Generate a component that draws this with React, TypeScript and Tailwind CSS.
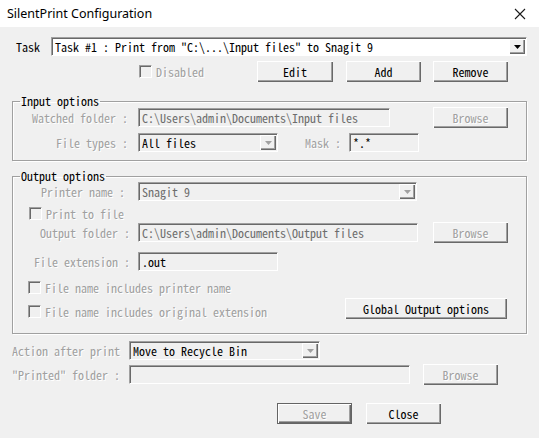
import React from 'react';

const raised = 'shadow-[inset_1px_1px_0_#ffffff,inset_-1px_-1px_0_#696969,inset_-2px_-2px_0_#a0a0a0]';
const sunken = 'border border-t-[#a0a0a0] border-l-[#a0a0a0] border-r-white border-b-white shadow-[inset_1px_1px_0_#696969]';
const emboss = '[text-shadow:1px_1px_0_#ffffff]';

const Button: React.FC<{ label: string; w: string; disabled?: boolean; isDefault?: boolean }> = ({ label, w, disabled, isDefault }) => (
  <div
    className={`${w} h-[21px] flex items-center justify-center bg-[#f0f0f0] ${raised} ${
      isDefault ? 'border border-[#646464]' : ''
    } ${disabled ? `text-[#a0a0a0] ${emboss}` : 'text-black'}`}
  >
    {label}
  </div>
);

const TextBox: React.FC<{ value: string; w: string; white?: boolean; dim?: boolean }> = ({ value, w, white, dim }) => (
  <div
    className={`${w} h-[19px] flex items-center pl-[3px] ${sunken} ${white ? 'bg-white' : 'bg-[#f0f0f0]'} ${
      dim ? 'text-[#6d6d6d]' : 'text-black'
    } whitespace-nowrap leading-[15px]`}
  >
    {value}
  </div>
);

const Arrow: React.FC<{ disabled?: boolean }> = ({ disabled }) => (
  <div className={`w-[16px] h-[15px] mr-[1px] shrink-0 flex items-center justify-center bg-[#f0f0f0] ${raised}`}>
    <svg width="7" height="4" viewBox="0 0 7 4">
      <polygon points="0,0 7,0 3.5,4" fill={disabled ? '#a0a0a0' : '#000000'} />
    </svg>
  </div>
);

const Combo: React.FC<{ value: string; w: string; white?: boolean; dim?: boolean; arrowDisabled?: boolean }> = ({
  value,
  w,
  white,
  dim,
  arrowDisabled,
}) => (
  <div
    className={`${w} h-[19px] flex items-center ${sunken} ${white ? 'bg-white' : 'bg-[#f0f0f0]'} ${
      dim ? 'text-[#6d6d6d]' : 'text-black'
    }`}
  >
    <span className="flex-1 pl-[3px] whitespace-nowrap leading-[15px]">{value}</span>
    <Arrow disabled={arrowDisabled} />
  </div>
);

const Check: React.FC<{ label: string }> = ({ label }) => (
  <div className={`flex items-center gap-[4px] text-[#a0a0a0] ${emboss}`}>
    <div className={`w-[13px] h-[13px] bg-[#f0f0f0] ${sunken}`} />
    <span>{label}</span>
  </div>
);

const Label: React.FC<{ text: string; w?: string; className?: string }> = ({ text, w = 'w-[117px]', className = '' }) => (
  <span className={`${w} shrink-0 text-right whitespace-nowrap text-[#a0a0a0] ${emboss} ${className}`}>{text}</span>
);

export default function App() {
  return (
    <div
      className="w-[539px] h-[438px] bg-[#f0f0f0] text-[12px] leading-[12px] text-black overflow-hidden"
      style={{ fontFamily: '"Noto Sans Mono CJK SC", "Liberation Mono", monospace' }}
    >
      {/* title bar */}
      <div className="h-[27px] bg-white flex items-center justify-between pl-[7px] pr-[13px]">
        <span className="text-[12.5px] tracking-normal text-black" style={{ fontFamily: '"Noto Sans", "Open Sans", sans-serif' }}>
          SilentPrint Configuration
        </span>
        <svg width="12" height="12" viewBox="0 0 12 12">
          <path d="M1 1 L11 11 M11 1 L1 11" stroke="#1a1a1a" strokeWidth="1.1" />
        </svg>
      </div>

      <div className="pl-[12px]">
        {/* task row */}
        <div className="mt-[10px] flex items-center">
          <span className="ml-[4px] w-[35px]">Task</span>
          <Combo value={'Task #1 : Print from "C:\\...\\Input files" to Snagit 9'} w="w-[476px]" white />
        </div>

        {/* buttons row */}
        <div className="mt-[5px] flex items-center">
          <div className="w-[127px]" />
          <div className="w-[118px]">
            <Check label="Disabled" />
          </div>
          <Button label="Edit" w="w-[76px]" />
          <div className="w-[13px]" />
          <Button label="Add" w="w-[75px]" />
          <div className="w-[12px]" />
          <Button label="Remove" w="w-[75px]" />
        </div>

        {/* input options */}
        <fieldset className="mt-[13px] w-[515px] border border-[#a0a0a0] shadow-[inset_1px_1px_0_#ffffff,1px_1px_0_#ffffff] pb-[8px]">
          <legend className="ml-[7px] px-[1px] leading-[12px]">Input options</legend>
          <div className="flex items-center h-[21px]">
            <Label text="Watched folder :" w="w-[118px]" className="pr-[3px]" />
            <div className="w-[7px]" />
            <TextBox value={'C:\\Users\\admin\\Documents\\Input files'} w="w-[252px]" dim />
            <div className="w-[43px]" />
            <Button label="Browse" w="w-[75px]" disabled />
          </div>
          <div className="mt-[5px] flex items-center">
            <Label text="File types :" w="w-[118px]" className="pr-[3px]" />
            <div className="w-[7px]" />
            <Combo value="All files" w="w-[140px]" arrowDisabled />
            <span className={`ml-[27px] w-[44px] text-[#a0a0a0] ${emboss}`}>Mask :</span>
            <TextBox value="*.*" w="w-[70px]" />
          </div>
        </fieldset>

        {/* output options */}
        <fieldset className="mt-[9px] w-[515px] border border-[#a0a0a0] shadow-[inset_1px_1px_0_#ffffff,1px_1px_0_#ffffff] pb-[14px]">
          <legend className="ml-[7px] px-[1px] leading-[12px]">Output options</legend>
          <div className="flex items-center">
            <Label text="Printer name :" w="w-[118px]" className="pr-[6px]" />
            <div className="w-[7px]" />
            <Combo value="Snagit 9" w="w-[279px]" dim arrowDisabled />
          </div>
          <div className="mt-[6px] ml-[16px]">
            <Check label="Print to file" />
          </div>
          <div className="mt-[2px] flex items-center h-[21px]">
            <Label text="Output folder :" w="w-[118px]" className="pr-[1px]" />
            <div className="w-[7px]" />
            <TextBox value={'C:\\Users\\admin\\Documents\\Output files'} w="w-[280px]" dim />
            <div className="w-[15px]" />
            <Button label="Browse" w="w-[75px]" disabled />
          </div>
          <div className="mt-[8px] flex items-center h-[21px]">
            <Label text="File extension :" w="w-[118px]" className="pr-[1px]" />
            <div className="w-[7px]" />
            <TextBox value=".out" w="w-[140px]" />
          </div>
          <div className="mt-[9px] ml-[15px]">
            <Check label="File name includes printer name" />
          </div>
          <div className="mt-[4px] flex items-end h-[21px]">
            <div className="ml-[15px] w-[317px] pb-[1px]">
              <Check label="File name includes original extension" />
            </div>
            <Button label="Global Output options" w="w-[162px]" />
          </div>
        </fieldset>

        {/* after print */}
        <div className="mt-[7px] flex items-center">
          <span className={`w-[117px] text-[#a0a0a0] ${emboss} whitespace-nowrap`}>Action after print</span>
          <Combo value="Move to Recycle Bin" w="w-[191px]" arrowDisabled />
        </div>
        <div className="mt-[4px] flex items-center h-[21px]">
          <span className={`w-[117px] text-[#a0a0a0] ${emboss} whitespace-nowrap`}>"Printed" folder :</span>
          <TextBox value="" w="w-[281px]" />
          <div className="w-[13px]" />
          <Button label="Browse" w="w-[75px]" disabled />
        </div>

        {/* dialog buttons */}
        <div className="mt-[18px] ml-[265px] flex items-center gap-[14px]">
          <Button label="Save" w="w-[75px]" disabled isDefault />
          <Button label="Close" w="w-[75px]" />
        </div>
      </div>
    </div>
  );
}
